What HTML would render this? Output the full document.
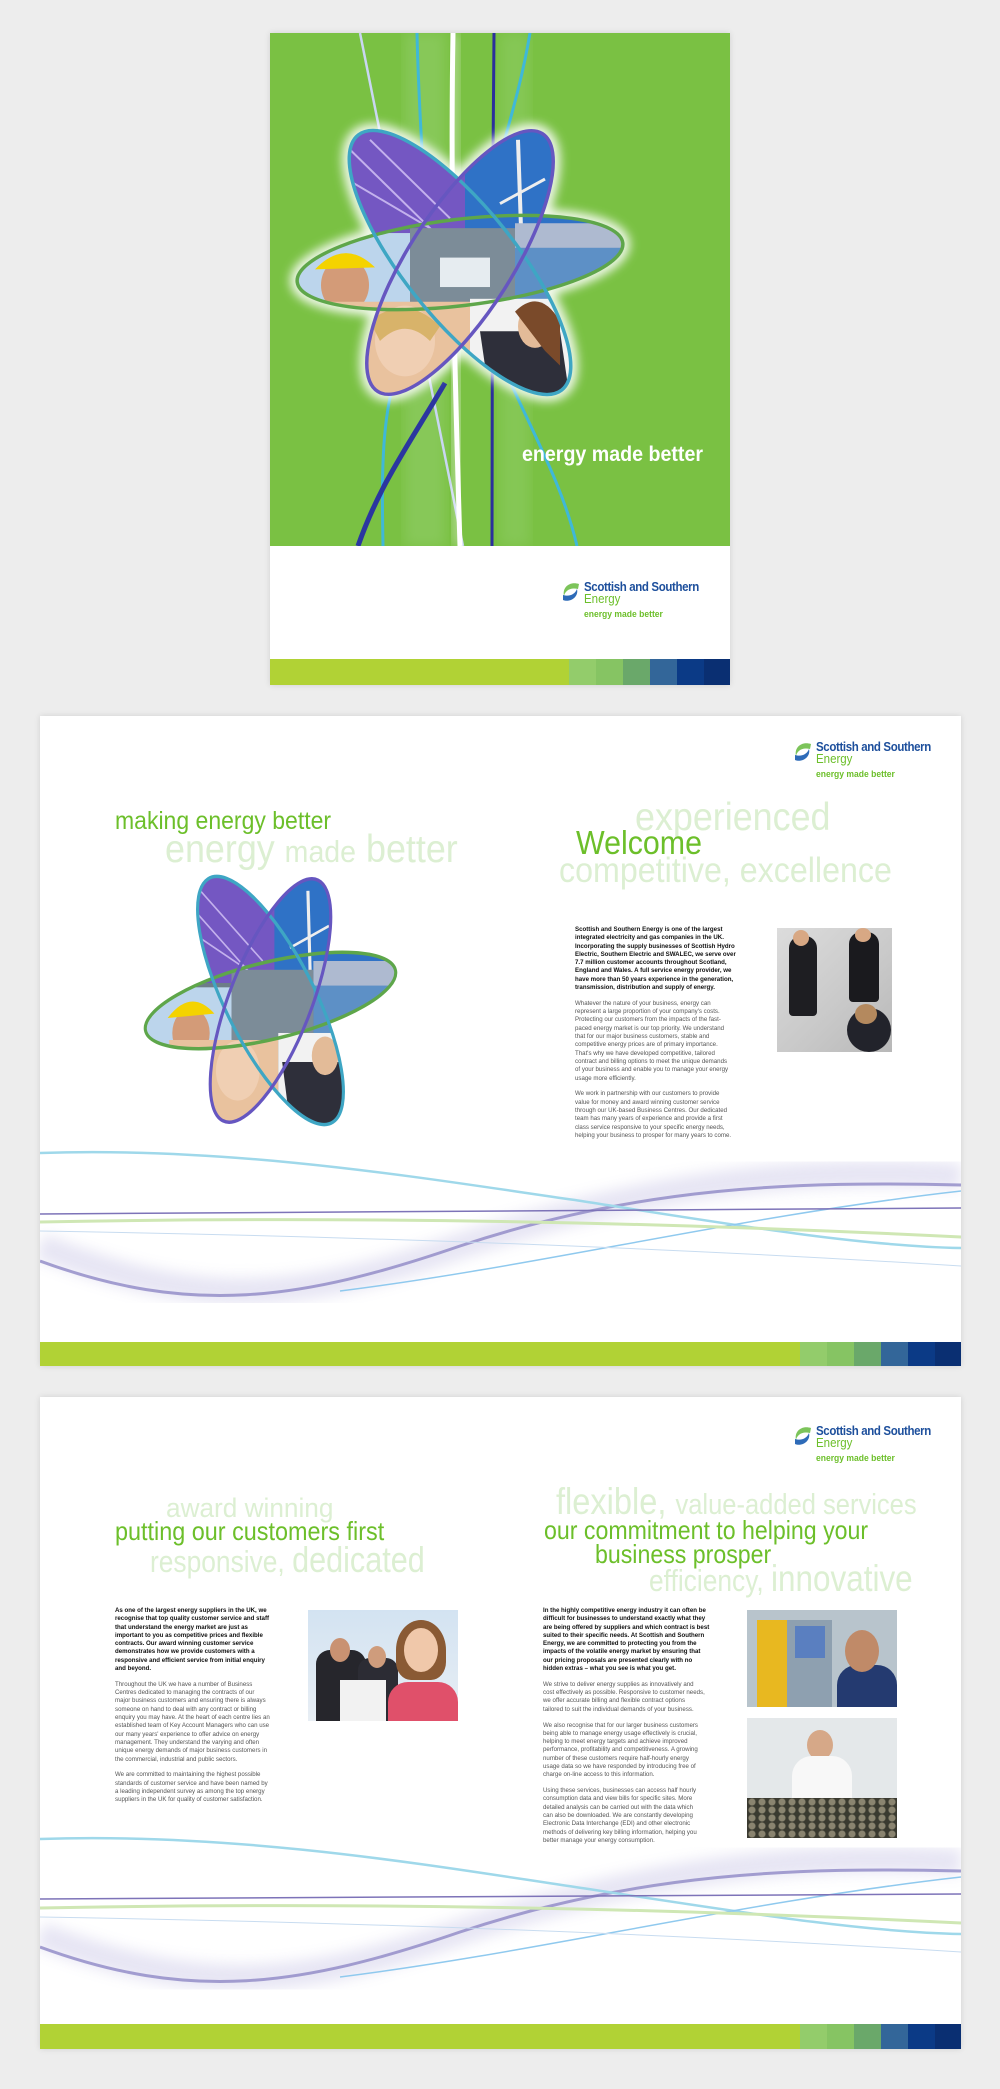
<!DOCTYPE html>
<html><head><meta charset="utf-8">
<style>
*{margin:0;padding:0;box-sizing:border-box}
body{width:1000px;height:2089px;background:#ededed;position:relative;overflow:hidden;font-family:"Liberation Sans",sans-serif}
.pg{position:absolute;background:#fff;box-shadow:0 0 6px rgba(0,0,0,.12);overflow:hidden}
.a{position:absolute;white-space:nowrap;line-height:1}
.h{transform:scaleX(.92);transform-origin:0 0}
.g{color:#6cbf2a}
.f{color:#dcefd2}
.body{position:absolute;font-size:6.6px;line-height:8.3px;color:#555;white-space:nowrap;transform:scaleX(.93);transform-origin:0 0}
.body b{color:#111}
.body p{margin-bottom:7.5px}
.bar{position:absolute;left:0;right:0;height:25px;display:flex}
.bar i{display:block;height:100%}
.logo{position:absolute;width:150px;height:45px}
.logo .t1{position:absolute;left:24px;top:0;font-size:12.5px;font-weight:bold;color:#1d4f9c;letter-spacing:-.4px;line-height:12px;white-space:nowrap;transform:scaleX(.92);transform-origin:0 0}
.logo .t2{position:absolute;left:24px;top:12px;font-size:12.5px;color:#6cbf2a;line-height:12px;transform:scaleX(.92);transform-origin:0 0}
.logo .t3{position:absolute;left:24px;top:29px;font-size:9.5px;font-weight:bold;color:#6cbf2a;line-height:9px;white-space:nowrap;transform:scaleX(.9);transform-origin:0 0}
.logo svg{position:absolute;left:0;top:0}
.ph{position:absolute;overflow:hidden}
svg{overflow:visible}
</style></head><body>

<!-- COVER -->
<div class="pg" style="left:270px;top:33px;width:460px;height:652px">
  <div style="position:absolute;left:0;top:0;width:460px;height:513px;background:#7ac143"></div>
  <svg style="position:absolute;left:0;top:0;overflow:hidden" width="460" height="513" viewBox="0 0 460 513">
    <defs><filter id="bl"><feGaussianBlur stdDeviation="6"/></filter></defs>
    <rect x="135" y="0" width="40" height="513" fill="#a6d98a" opacity=".3" filter="url(#bl)"/>
    <rect x="230" y="0" width="30" height="513" fill="#a6d98a" opacity=".25" filter="url(#bl)"/>
    <path d="M90 0 L193 513" stroke="#c9d6f2" stroke-width="2.5" fill="none"/>
    <path d="M147 0 C150 150 170 250 130 330 C110 380 112 450 113 513" stroke="#3fb8d8" stroke-width="3" fill="none"/>
    <path d="M260 0 C240 120 190 200 220 300 C250 380 290 440 307 513" stroke="#3fb8d8" stroke-width="3" fill="none"/>
    <path d="M183 0 C180 170 185 350 190 513" stroke="#fff" stroke-width="10" fill="none" opacity=".5" filter="url(#bl)"/>
    <path d="M183 0 C180 170 185 350 190 513" stroke="#fff" stroke-width="5" fill="none"/>
    <path d="M224 0 C222 170 222 350 222 513" stroke="#2b2f9c" stroke-width="3" fill="none"/>
    <path d="M175 350 C140 410 110 450 88 513" stroke="#2b36a0" stroke-width="5" fill="none"/>
    <text x="252" y="428" font-family="Liberation Sans" font-weight="bold" font-size="21" fill="#fff" textLength="181" lengthAdjust="spacingAndGlyphs">energy made better</text>
  </svg>
  <svg style="position:absolute;left:20px;top:97px" width="340" height="265" viewBox="0 0 340 270" preserveAspectRatio="none">
    <defs>
      <filter id="gw"><feGaussianBlur stdDeviation="5"/></filter>
      <clipPath id="cu1">
        <ellipse cx="170" cy="135" rx="164" ry="44" transform="rotate(-7 170 135)"/>
        <ellipse cx="170" cy="135" rx="165" ry="56" transform="rotate(52 170 135)"/>
        <ellipse cx="170" cy="135" rx="155" ry="52" transform="rotate(-58 170 135)"/>
      </clipPath>
    </defs>
    <g fill="none" stroke="#fff" stroke-width="14" opacity=".9" filter="url(#gw)">
      <ellipse cx="170" cy="135" rx="164" ry="44" transform="rotate(-7 170 135)"/>
      <ellipse cx="170" cy="135" rx="165" ry="56" transform="rotate(52 170 135)"/>
      <ellipse cx="170" cy="135" rx="155" ry="52" transform="rotate(-58 170 135)"/>
    </g>
    <g clip-path="url(#cu1)">
      <rect x="-20" y="-20" width="380" height="310" fill="#6d7d88"/>
      <rect x="-20" y="-20" width="200" height="135" fill="#7457c2"/>
      <path d="M60 20 L150 110 M80 10 L160 90 M40 40 L140 100" stroke="#e5d7ff" stroke-width="2" opacity=".7"/>
      <rect x="175" y="-20" width="180" height="130" fill="#2f72c6"/>
      <path d="M228 10 L232 130" stroke="#eee" stroke-width="4"/><path d="M210 75 L255 50" stroke="#eee" stroke-width="3"/>
      <rect x="225" y="95" width="130" height="30" fill="#aebad0"/>
      <rect x="225" y="120" width="130" height="55" fill="#5d90c6"/>
      <rect x="-20" y="105" width="140" height="75" fill="#bcd5ec"/>
      <ellipse cx="55" cy="158" rx="24" ry="28" fill="#d39b78"/>
      <path d="M25 142 Q55 110 85 140 Z" fill="#f4d300"/>
      <rect x="120" y="100" width="105" height="80" fill="#7c8c98"/>
      <rect x="150" y="130" width="50" height="30" fill="#e6ecf0"/>
      <rect x="40" y="175" width="140" height="110" fill="#e9c29e"/>
      <ellipse cx="115" cy="215" rx="30" ry="36" fill="#f0cfb3"/>
      <path d="M80 195 Q115 165 150 200 L140 215 Q115 190 90 215Z" fill="#d8b36a"/>
      <rect x="180" y="172" width="140" height="110" fill="#f2f2f2"/>
      <path d="M190 205 L270 205 L280 275 L200 275Z" fill="#2e2f3a"/>
      <ellipse cx="245" cy="200" rx="17" ry="22" fill="#e3bb98"/>
      <path d="M225 185 Q250 160 270 195 L270 240 L255 225Z" fill="#7a4a2a"/>
    </g>
    <g fill="none">
      <ellipse cx="170" cy="135" rx="164" ry="44" transform="rotate(-7 170 135)" stroke="#5ea64a" stroke-width="3.5"/>
      <ellipse cx="170" cy="135" rx="165" ry="56" transform="rotate(52 170 135)" stroke="#3ea6c4" stroke-width="3.5"/>
      <ellipse cx="170" cy="135" rx="155" ry="52" transform="rotate(-58 170 135)" stroke="#6656c0" stroke-width="3.5"/>
    </g>
  </svg>
  <div class="logo" style="left:290px;top:548px">
    <svg width="22" height="22" viewBox="0 0 22 22"><path d="M19 3 C10 0 2 6 4 15 C5 10 10 6 18 8Z" fill="#7cc45a"/><path d="M3 19 C10 22 19 16 17 8 C15 13 10 16 3 14Z" fill="#2e6bb8"/></svg>
    <div class="t1">Scottish and Southern</div><div class="t2">Energy</div><div class="t3">energy made better</div>
  </div>
  <div class="bar" style="top:626px;height:26px"><i style="flex:1;background:#b1d235"></i><i style="width:27px;background:#93cc6b"></i><i style="width:27px;background:#86c463"></i><i style="width:27px;background:#6aa86a"></i><i style="width:27px;background:#336699"></i><i style="width:27px;background:#0b3a86"></i><i style="width:26px;background:#0a2f72"></i></div>
</div>

<!-- SPREAD 1 -->
<div class="pg" style="left:40px;top:716px;width:921px;height:650px">
  <div class="logo" style="left:752px;top:25px">
    <svg width="22" height="22" viewBox="0 0 22 22"><path d="M19 3 C10 0 2 6 4 15 C5 10 10 6 18 8Z" fill="#7cc45a"/><path d="M3 19 C10 22 19 16 17 8 C15 13 10 16 3 14Z" fill="#2e6bb8"/></svg>
    <div class="t1">Scottish and Southern</div><div class="t2">Energy</div><div class="t3">energy made better</div>
  </div>
  <div class="a h g" style="left:75px;top:93px;font-size:25px">making energy better</div>
  <div class="a h f" style="left:125px;top:114px;font-size:39px">energy <span style="font-size:31px">made</span> better</div>
  <div class="a h f" style="left:595px;top:82px;font-size:39px">experienced</div>
  <div class="a h g" style="left:536px;top:110px;font-size:33px">Welcome</div>
  <div class="a h f" style="left:519px;top:137px;font-size:35px">competitive, excellence</div>
  <svg style="position:absolute;left:98px;top:166px" width="265" height="237" viewBox="0 0 340 270" preserveAspectRatio="none">
    <defs>
      <clipPath id="cu2">
        <ellipse cx="170" cy="135" rx="164" ry="44" transform="rotate(-12 170 135)"/>
        <ellipse cx="170" cy="135" rx="160" ry="56" transform="rotate(60 170 135)"/>
        <ellipse cx="170" cy="135" rx="150" ry="52" transform="rotate(-66 170 135)"/>
      </clipPath>
    </defs>
    <g clip-path="url(#cu2)">
      <rect x="-20" y="-20" width="380" height="310" fill="#6d7d88"/>
      <rect x="-20" y="-20" width="200" height="135" fill="#7457c2"/>
      <path d="M60 20 L150 110 M80 10 L160 90 M40 40 L140 100" stroke="#e5d7ff" stroke-width="2" opacity=".7"/>
      <rect x="175" y="-20" width="180" height="130" fill="#2f72c6"/>
      <path d="M218 10 L222 140" stroke="#eee" stroke-width="4"/><path d="M195 75 L245 50" stroke="#eee" stroke-width="3"/>
      <rect x="225" y="90" width="130" height="30" fill="#aebad0"/>
      <rect x="225" y="118" width="130" height="60" fill="#5d90c6"/>
      <rect x="-20" y="120" width="140" height="75" fill="#bcd5ec"/>
      <ellipse cx="68" cy="172" rx="24" ry="28" fill="#d39b78"/>
      <path d="M38 155 Q68 120 98 150 Z" fill="#f4d300"/>
      <rect x="120" y="100" width="105" height="80" fill="#7c8c98"/>
      <rect x="40" y="180" width="140" height="110" fill="#e9c29e"/>
      <ellipse cx="128" cy="215" rx="28" ry="34" fill="#f0cfb3"/>
      <rect x="180" y="172" width="140" height="110" fill="#f2f2f2"/>
      <path d="M185 205 L265 205 L275 275 L195 275Z" fill="#2e2f3a"/>
      <ellipse cx="240" cy="198" rx="17" ry="22" fill="#e3bb98"/>
    </g>
    <g fill="none">
      <ellipse cx="170" cy="135" rx="164" ry="44" transform="rotate(-12 170 135)" stroke="#5ea64a" stroke-width="4"/>
      <ellipse cx="170" cy="135" rx="160" ry="56" transform="rotate(60 170 135)" stroke="#3ea6c4" stroke-width="4"/>
      <ellipse cx="170" cy="135" rx="150" ry="52" transform="rotate(-66 170 135)" stroke="#6656c0" stroke-width="4"/>
    </g>
  </svg>
  <div class="body" style="left:535px;top:210px">
    <p><b>Scottish and Southern Energy is one of the largest<br>integrated electricity and gas companies in the UK.<br>Incorporating the supply businesses of Scottish Hydro<br>Electric, Southern Electric and SWALEC, we serve over<br>7.7 million customer accounts throughout Scotland,<br>England and Wales. A full service energy provider, we<br>have more than 50 years experience in the generation,<br>transmission, distribution and supply of energy.</b></p>
    <p>Whatever the nature of your business, energy can<br>represent a large proportion of your company's costs.<br>Protecting our customers from the impacts of the fast-<br>paced energy market is our top priority. We understand<br>that for our major business customers, stable and<br>competitive energy prices are of primary importance.<br>That's why we have developed competitive, tailored<br>contract and billing options to meet the unique demands<br>of your business and enable you to manage your energy<br>usage more efficiently.</p>
    <p>We work in partnership with our customers to provide<br>value for money and award winning customer service<br>through our UK-based Business Centres. Our dedicated<br>team has many years of experience and provide a first<br>class service responsive to your specific energy needs,<br>helping your business to prosper for many years to come.</p>
  </div>
  <div class="ph" style="left:737px;top:212px;width:115px;height:124px;background:linear-gradient(135deg,#dcdcdc,#c8c8c8 60%,#b8b8b8)">
    <div style="position:absolute;left:12px;top:8px;width:28px;height:80px;background:#1e1e22;border-radius:12px 12px 4px 4px"></div>
    <div style="position:absolute;left:16px;top:2px;width:16px;height:16px;background:#d8a884;border-radius:50%"></div>
    <div style="position:absolute;left:72px;top:4px;width:30px;height:70px;background:#1a1a1e;border-radius:12px 12px 4px 4px"></div>
    <div style="position:absolute;left:78px;top:0;width:16px;height:14px;background:#d8a884;border-radius:50%"></div>
    <div style="position:absolute;left:70px;top:80px;width:44px;height:44px;background:#22232b;border-radius:50%"></div>
    <div style="position:absolute;left:78px;top:76px;width:22px;height:20px;background:#b4895e;border-radius:50%"></div>
  </div>
  <svg style="position:absolute;left:0;top:420px;overflow:hidden" width="921" height="200" viewBox="0 0 921 200">
    <defs><filter id="wb"><feGaussianBlur stdDeviation="7"/></filter></defs>
    <path d="M0 110 C150 170 250 170 420 110 C600 50 750 30 921 40" stroke="#c9c6e6" stroke-width="26" fill="none" opacity=".45" filter="url(#wb)"/>
    <path d="M0 125 C150 180 260 165 420 110 C600 50 760 45 921 49" stroke="#8f88c6" stroke-width="3" fill="none" opacity=".8"/>
    <path d="M0 17 C200 10 400 45 535 64 C700 90 820 110 921 112" stroke="#9fd8ea" stroke-width="2.5" fill="none"/>
    <path d="M300 155 C500 130 700 80 921 55" stroke="#8fc9ee" stroke-width="1.5" fill="none"/>
    <path d="M0 78 L921 72" stroke="#7d73b8" stroke-width="1.5" fill="none"/>
    <path d="M0 86 C300 80 600 85 921 101" stroke="#cfe7b4" stroke-width="3" fill="none"/>
    <path d="M0 95 C300 100 600 110 921 130" stroke="#c8dcf0" stroke-width="1" fill="none"/>
  </svg>
  <div class="bar" style="top:626px;height:24px"><i style="flex:1;background:#b1d235"></i><i style="width:27px;background:#93cc6b"></i><i style="width:27px;background:#86c463"></i><i style="width:27px;background:#6aa86a"></i><i style="width:27px;background:#336699"></i><i style="width:27px;background:#0b3a86"></i><i style="width:26px;background:#0a2f72"></i></div>
</div>

<!-- SPREAD 2 -->
<div class="pg" style="left:40px;top:1397px;width:921px;height:652px">
  <div class="logo" style="left:752px;top:28px">
    <svg width="22" height="22" viewBox="0 0 22 22"><path d="M19 3 C10 0 2 6 4 15 C5 10 10 6 18 8Z" fill="#7cc45a"/><path d="M3 19 C10 22 19 16 17 8 C15 13 10 16 3 14Z" fill="#2e6bb8"/></svg>
    <div class="t1">Scottish and Southern</div><div class="t2">Energy</div><div class="t3">energy made better</div>
  </div>
  <div class="a f" style="left:126px;top:98px;font-size:27px;transform:scaleX(.97);transform-origin:0 0">award winning</div>
  <div class="a g" style="left:75px;top:121px;font-size:26px;transform:scaleX(.9);transform-origin:0 0">putting our customers first</div>
  <div class="a f" style="left:110px;top:145px;font-size:31px;transform:scaleX(.85);transform-origin:0 0">responsive, <span style="font-size:36px">dedicated</span></div>
  <div class="a f" style="left:516px;top:86px;font-size:37px;transform:scaleX(.88);transform-origin:0 0">flexible, <span style="font-size:29px">value-added services</span></div>
  <div class="a g" style="left:504px;top:120px;font-size:26px;transform:scaleX(.89);transform-origin:0 0">our commitment to helping your</div>
  <div class="a g" style="left:555px;top:144px;font-size:26px;transform:scaleX(.89);transform-origin:0 0">business prosper</div>
  <div class="a f" style="left:609px;top:163px;font-size:31px;transform:scaleX(.85);transform-origin:0 0">efficiency, <span style="font-size:37px">innovative</span></div>
  <div class="body" style="left:75px;top:210px">
    <p><b>As one of the largest energy suppliers in the UK, we<br>recognise that top quality customer service and staff<br>that understand the energy market are just as<br>important to you as competitive prices and flexible<br>contracts. Our award winning customer service<br>demonstrates how we provide customers with a<br>responsive and efficient service from initial enquiry<br>and beyond.</b></p>
    <p>Throughout the UK we have a number of Business<br>Centres dedicated to managing the contracts of our<br>major business customers and ensuring there is always<br>someone on hand to deal with any contract or billing<br>enquiry you may have. At the heart of each centre lies an<br>established team of Key Account Managers who can use<br>our many years' experience to offer advice on energy<br>management. They understand the varying and often<br>unique energy demands of major business customers in<br>the commercial, industrial and public sectors.</p>
    <p>We are committed to maintaining the highest possible<br>standards of customer service and have been named by<br>a leading independent survey as among the top energy<br>suppliers in the UK for quality of customer satisfaction.</p>
  </div>
  <div class="ph" style="left:268px;top:213px;width:150px;height:111px;background:linear-gradient(180deg,#d3e3f2,#e8eef4)">
    <div style="position:absolute;left:8px;top:40px;width:50px;height:71px;background:#26262c;border-radius:14px 14px 0 0"></div>
    <div style="position:absolute;left:22px;top:28px;width:20px;height:24px;background:#c99272;border-radius:50%"></div>
    <div style="position:absolute;left:50px;top:48px;width:40px;height:63px;background:#2c2c34;border-radius:12px 12px 0 0"></div>
    <div style="position:absolute;left:60px;top:36px;width:18px;height:22px;background:#cf9c7c;border-radius:50%"></div>
    <div style="position:absolute;left:32px;top:70px;width:46px;height:41px;background:#f2f2f2"></div>
    <div style="position:absolute;left:88px;top:10px;width:50px;height:60px;background:#8a5a34;border-radius:50% 50% 30% 30%"></div>
    <div style="position:absolute;left:96px;top:18px;width:34px;height:44px;background:#f0c8aa;border-radius:50%"></div>
    <div style="position:absolute;left:80px;top:72px;width:70px;height:39px;background:#e0506a;border-radius:20px 20px 0 0"></div>
  </div>
  <div class="body" style="left:503px;top:210px">
    <p><b>In the highly competitive energy industry it can often be<br>difficult for businesses to understand exactly what they<br>are being offered by suppliers and which contract is best<br>suited to their specific needs. At Scottish and Southern<br>Energy, we are committed to protecting you from the<br>impacts of the volatile energy market by ensuring that<br>our pricing proposals are presented clearly with no<br>hidden extras – what you see is what you get.</b></p>
    <p>We strive to deliver energy supplies as innovatively and<br>cost effectively as possible. Responsive to customer needs,<br>we offer accurate billing and flexible contract options<br>tailored to suit the individual demands of your business.</p>
    <p>We also recognise that for our larger business customers<br>being able to manage energy usage effectively is crucial,<br>helping to meet energy targets and achieve improved<br>performance, profitability and competitiveness. A growing<br>number of these customers require half-hourly energy<br>usage data so we have responded by introducing free of<br>charge on-line access to this information.</p>
    <p>Using these services, businesses can access half hourly<br>consumption data and view bills for specific sites. More<br>detailed analysis can be carried out with the data which<br>can also be downloaded. We are constantly developing<br>Electronic Data Interchange (EDI) and other electronic<br>methods of delivering key billing information, helping you<br>better manage your energy consumption.</p>
  </div>
  <div class="ph" style="left:707px;top:213px;width:150px;height:97px;background:#b8c4cc">
    <div style="position:absolute;left:10px;top:10px;width:55px;height:87px;background:#e8b820"></div>
    <div style="position:absolute;left:40px;top:10px;width:45px;height:87px;background:#8ea0b0"></div>
    <div style="position:absolute;left:48px;top:16px;width:30px;height:32px;background:#5a7fc0"></div>
    <div style="position:absolute;left:90px;top:55px;width:60px;height:42px;background:#243a70;border-radius:20px 20px 0 0"></div>
    <div style="position:absolute;left:98px;top:20px;width:34px;height:42px;background:#c08a68;border-radius:50%"></div>
  </div>
  <div class="ph" style="left:707px;top:321px;width:150px;height:120px;background:#e4e8ea">
    <div style="position:absolute;left:60px;top:12px;width:26px;height:30px;background:#d6a888;border-radius:50%"></div>
    <div style="position:absolute;left:45px;top:38px;width:60px;height:50px;background:#f8f8f8;border-radius:20px 20px 0 0"></div>
    <div style="position:absolute;left:0;top:80px;width:150px;height:40px;background:#3a3a30"></div>
    <div style="position:absolute;left:0;top:80px;width:150px;height:40px;background:radial-gradient(circle,#8a8470 3px,transparent 4px) 0 0/10px 8px"></div>
  </div>
  <svg style="position:absolute;left:0;top:420px;overflow:hidden" width="921" height="200" viewBox="0 0 921 200">
    <defs><filter id="wb2"><feGaussianBlur stdDeviation="7"/></filter></defs>
    <path d="M0 118 C150 175 250 175 420 115 C600 55 750 35 921 45" stroke="#c9c6e6" stroke-width="26" fill="none" opacity=".45" filter="url(#wb2)"/>
    <path d="M0 130 C150 185 260 170 420 115 C600 55 760 50 921 54" stroke="#8f88c6" stroke-width="3" fill="none" opacity=".8"/>
    <path d="M0 22 C200 15 400 50 535 70 C700 95 820 115 921 117" stroke="#9fd8ea" stroke-width="2.5" fill="none"/>
    <path d="M300 160 C500 135 700 85 921 60" stroke="#8fc9ee" stroke-width="1.5" fill="none"/>
    <path d="M0 82 L921 77" stroke="#7d73b8" stroke-width="1.5" fill="none"/>
    <path d="M0 91 C300 85 600 90 921 106" stroke="#cfe7b4" stroke-width="3" fill="none"/>
    <path d="M0 100 C300 105 600 115 921 135" stroke="#c8dcf0" stroke-width="1" fill="none"/>
  </svg>
  <div class="bar" style="top:627px;height:25px"><i style="flex:1;background:#b1d235"></i><i style="width:27px;background:#93cc6b"></i><i style="width:27px;background:#86c463"></i><i style="width:27px;background:#6aa86a"></i><i style="width:27px;background:#336699"></i><i style="width:27px;background:#0b3a86"></i><i style="width:26px;background:#0a2f72"></i></div>
</div>
</body></html>
